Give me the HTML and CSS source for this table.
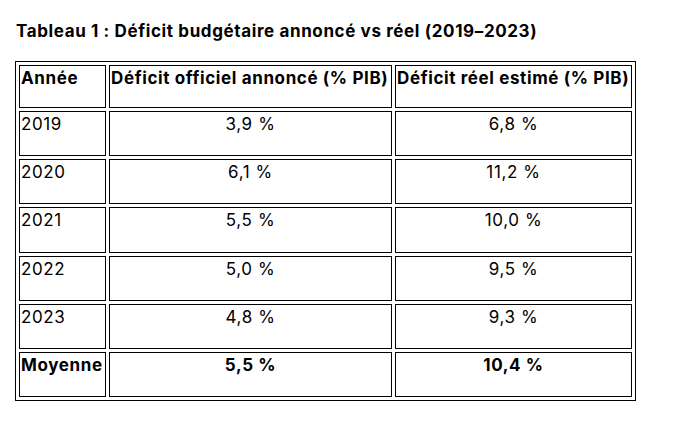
FILE: index.html
```html
<!DOCTYPE html>
<html lang="fr">
<head>
<meta charset="utf-8">
<title>Tableau 1</title>
<link rel="stylesheet" href="styles.css">
</head>
<body>
<div class="page">
  <h1 class="caption">Tableau 1 : Déficit budgétaire annoncé vs réel (2019–2023)</h1>
  <table class="data">
    <colgroup>
      <col class="c-year">
      <col class="c-off">
      <col class="c-real">
    </colgroup>
    <thead>
      <tr class="head">
        <th class="left">Année</th>
        <th class="left">Déficit officiel annoncé (% PIB)</th>
        <th class="left">Déficit réel estimé (% PIB)</th>
      </tr>
    </thead>
    <tbody>
      <tr><td class="left">2019</td><td>3,9 %</td><td>6,8 %</td></tr>
      <tr><td class="left">2020</td><td>6,1 %</td><td>11,2 %</td></tr>
      <tr><td class="left">2021</td><td>5,5 %</td><td>10,0 %</td></tr>
      <tr><td class="left">2022</td><td>5,0 %</td><td>9,5 %</td></tr>
      <tr><td class="left">2023</td><td>4,8 %</td><td>9,3 %</td></tr>
      <tr class="avg"><td class="left">Moyenne</td><td>5,5 %</td><td>10,4 %</td></tr>
    </tbody>
  </table>
</div>
</body>
</html>
```

FILE: styles.css
```css
html, body {
  margin: 0;
  padding: 0;
  background: #ffffff;
}

body {
  font-family: Inter, "Liberation Sans", sans-serif;
  color: #000000;
}

.page {
  padding: 22px 0 0 15px;
}

.caption {
  margin: 0 0 20px 1px;
  font-size: 17px;
  font-weight: 700;
  line-height: 19px;
  letter-spacing: 0.62px;
}

.data {
  border-collapse: separate;
  border-spacing: 3px;
  border: 1px solid #000;
  table-layout: fixed;
  width: 621px;
}

.c-year { width: 87px; }
.c-off { width: 283px; }
.c-real { width: 237px; }

.data th,
.data td {
  border: 1px solid #000;
  padding: 3px 1px 0 1px;
  height: 43px;
  box-sizing: border-box;
  vertical-align: top;
  font-size: 17px;
  line-height: 19px;
  letter-spacing: 0.62px;
  text-align: center;
  font-weight: 400;
  white-space: nowrap;
}

.data tbody td {
  height: 45.2px;
}

.data th {
  font-weight: 700;
}

.data .left {
  text-align: left;
}

.avg td {
  font-weight: 700;
}
```
